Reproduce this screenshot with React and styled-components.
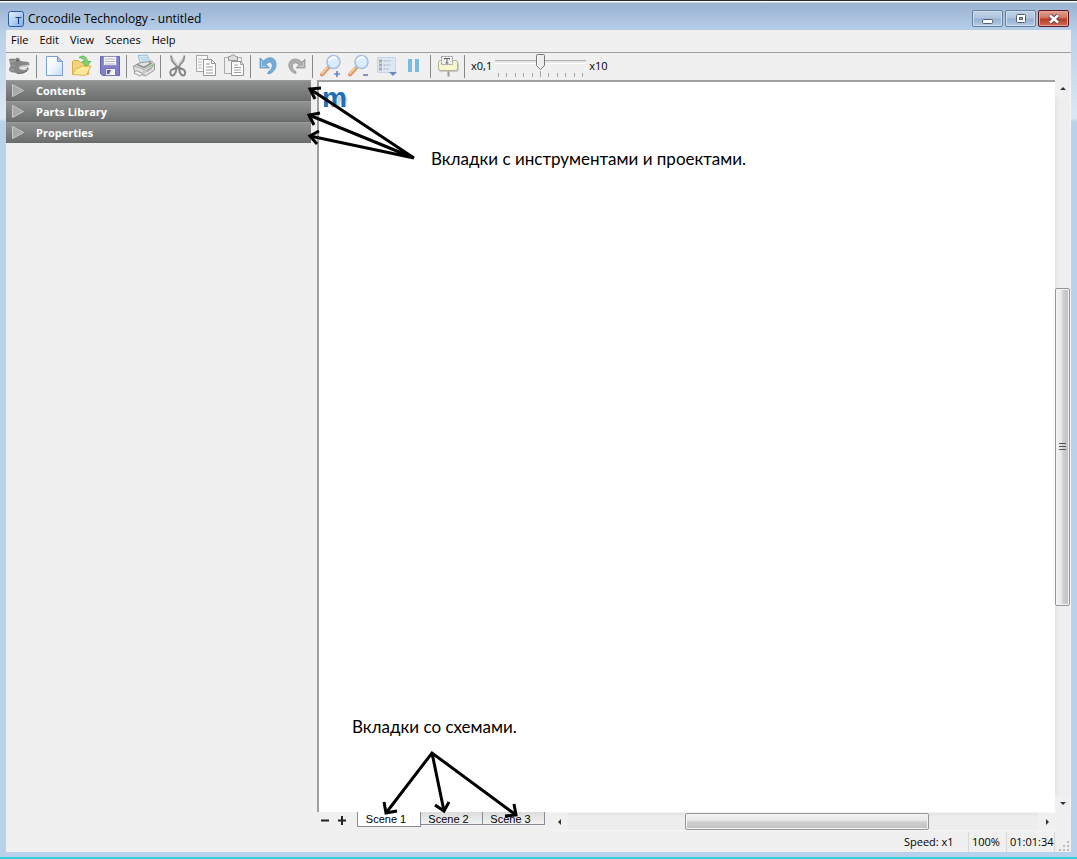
import React, { useState } from "react";
import styled, { createGlobalStyle, css } from "styled-components";

const GlobalStyle = createGlobalStyle`
  *, *::before, *::after { box-sizing: border-box; }
  body { margin: 0; background: #b9d1ea; }
  button { font: inherit; color: inherit; padding: 0; border: 0; background: none; }
  h1 { margin: 0; font-size: inherit; font-weight: inherit; }
  svg { display: block; }
`;

const Window = styled.div`
  display: flex;
  flex-direction: column;
  height: 100vh;
  min-height: 480px;
  padding: 0 6px 5px;
  border-top: 1px solid #2b2b35;
  border-bottom: 2px solid #35cfe3;
  background: linear-gradient(#fff 0 1px, #9ab3d1 2px, #b9d0ea 32px, #dce7f3 114px, #dce7f3 117px, #b9d1ea 121px);
  font: 12px/16px "Open Sans", "Noto Sans", sans-serif;
  color: #000;
`;

const TitleBar = styled.header`
  display: flex;
  align-items: center;
  flex: none;
  height: 29px;
  padding: 6px 2px 0;
  gap: 4px;
`;

const Title = styled.h1`
  flex: 1;
  font-size: 12px;
`;

const WindowButtons = styled.div`
  display: flex;
  gap: 2px;
`;

const WindowButton = styled.button`
  display: grid;
  place-items: center;
  width: 31px;
  height: 17px;
  border: 1px solid ${(p) => (p.$close ? "#5a1620" : "#667f9f")};
  border-radius: 2px;
  box-shadow: inset 0 0 0 1px ${(p) => (p.$close ? "#e5a79b" : "#cfdfee")};
  background: ${(p) =>
    p.$close
      ? "linear-gradient(#e3a193, #d0705f 48%, #b93a23 52%, #cf6b50)"
      : "linear-gradient(#bed0e3, #aec5de 48%, #94b1d0 52%, #b2cbe4)"};
`;

const Client = styled.div`
  display: flex;
  flex-direction: column;
  flex: 1;
  min-height: 0;
  background: #f0f0f0;
`;

const MenuBar = styled.nav`
  display: flex;
  flex: none;
  height: 22px;
  padding: 2px 5px 0;
  gap: 11px;
`;

const MenuItem = styled.button`
  height: 16px;
  font-size: 11px;
`;

const Toolbar = styled.div`
  display: flex;
  flex: none;
  height: 28px;
  border-top: 1px solid #a0a0a0;
`;

const ToolButton = styled.button`
  display: grid;
  place-items: center;
  width: 28px;
  height: 26px;
`;

const ToolSeparator = styled.span`
  width: 1px;
  height: 23px;
  margin: 2px 3px 0 2px;
  background: #888;
`;

const SpeedControl = styled.label`
  display: flex;
  padding-left: 3px;
  gap: 3px;
  font-size: 11px;
  line-height: 26px;
`;

const SliderBox = styled.span`
  display: flex;
  flex-direction: column;
  align-items: center;
  width: 91px;
`;

const thumbImage = `url("data:image/svg+xml,%3Csvg xmlns='http://www.w3.org/2000/svg' width='11' height='17'%3E%3Cpath d='M1.5 1.5Q1.5.5 2.5.5h6q1 0 1 1v10l-4 4-4-4z' fill='%23ededed' stroke='%23767676'/%3E%3Cpath d='M2.5 2v9l3 3' fill='none' stroke='white'/%3E%3C/svg%3E")`;

const Slider = styled.input`
  appearance: none;
  width: 91px;
  height: 17px;
  margin: 1px 0 0;
  background: linear-gradient(#b0b0b0, #b0b0b0) 0 6px / 100% 1px no-repeat,
    linear-gradient(#e3e7e7, #e3e7e7) 0 7px / 100% 2px no-repeat,
    linear-gradient(#fff, #fff) 0 9px / 100% 1px no-repeat;
  &::-webkit-slider-thumb {
    appearance: none;
    width: 11px;
    height: 17px;
    background: ${thumbImage};
  }
`;

const Body = styled.div`
  display: flex;
  flex: 1;
  min-height: 0;
`;

const Sidebar = styled.aside`
  flex: none;
  width: 305px;
  margin-right: 6px;
`;

const SectionHeader = styled.button`
  display: flex;
  align-items: center;
  width: 100%;
  height: 21px;
  padding-left: 5px;
  gap: 12px;
  border-top: 1px solid #9b9b9b;
  border-bottom: 1px solid #686a6a;
  background: linear-gradient(#909292, #6d6f6f);
  color: #fff;
  font-size: 11px;
  font-weight: 700;
`;

const Workspace = styled.main`
  display: grid;
  flex: 1;
  min-width: 0;
  grid-template: minmax(0, 1fr) 19px / minmax(0, 1fr) 16px;
`;

const Canvas = styled.section`
  position: relative;
  border-top: 2px solid #a0a0a0;
  border-left: 2px solid #a0a0a0;
  background: #fff;
`;

const CanvasMark = styled.span`
  position: absolute;
  top: 2px;
  left: 3px;
  font: 700 28px/28px "Liberation Sans", sans-serif;
  color: #1d70b7;

  &::after {
    content: "m";
    position: absolute;
    z-index: -1;
    left: 8px;
    top: 4px;
    font: italic 700 20px/24px "Liberation Sans", sans-serif;
    color: #cfcfcf;
  }
  z-index: 0;
`;

const Note = styled.p`
  position: absolute;
  left: ${(p) => p.$left}px;
  ${(p) => (p.$bottom ? css`bottom: ${p.$bottom}px;` : css`top: ${p.$top}px;`)}
  margin: 0;
  font: 17px/24px Lato, "Open Sans", sans-serif;
  white-space: nowrap;
`;

const Arrows = styled.svg`
  position: absolute;
  z-index: 2;
  left: ${(p) => p.$left}px;
  ${(p) => (p.$bottom ? css`bottom: ${p.$bottom}px;` : css`top: ${p.$top}px;`)}
  fill: none;
  stroke: #000;
  stroke-width: 3;
  pointer-events: none;
`;

const ScrollBar = styled.div`
  display: flex;
  flex: 1;
  flex-direction: ${(p) => (p.$vertical ? "column" : "row")};
  border: 1px solid #f5f5f5;
  border-width: ${(p) => (p.$vertical ? "0 1px 0 0" : "1px 0")};
  background: ${(p) =>
    p.$vertical ? "linear-gradient(90deg, #e3e3e3, #eee 4px)" : "linear-gradient(#e3e3e3, #ededed 4px)"};
`;

const ScrollArrow = styled.button`
  display: grid;
  place-items: center;
  flex: 0 0 17px;
  background: #f0f0f0;
`;

const ScrollSpace = styled.span`
  flex: ${(p) => p.$grow} 0 0;
`;

const ScrollThumb = styled.span`
  display: grid;
  place-items: center;
  flex: ${(p) => p.$grow} 0 0;
  border: 1px solid #959595;
  border-radius: 2px;
  box-shadow: inset 0 0 0 1px #f3f3f3;
  background: linear-gradient(${(p) => (p.$vertical ? "90deg" : "180deg")}, #f4f4f4, #e6e6e8 45%, #cfcfd1 52%, #c0c0c4);
`;

const BottomRow = styled.div`
  display: flex;
  min-width: 0;
`;

const SceneTools = styled.div`
  display: flex;
  width: 40px;
`;

const SceneTool = styled.button`
  display: grid;
  place-items: center;
  width: 17px;
  height: 17px;
`;

const SceneTabs = styled.div`
  display: flex;
  align-items: flex-start;
  width: 194px;
`;

const SceneTab = styled.button`
  width: ${(p) => (p.$active ? 64 : 62)}px;
  height: ${(p) => (p.$active ? 15 : 13)}px;
  padding-right: 6px;
  border: 1px solid #898c95;
  border-top: 0;
  border-left-width: ${(p) => (p.$active ? 1 : 0)}px;
  background: ${(p) => (p.$active ? "#fff" : "linear-gradient(#dcdcdc, #f2f2f2)")};
  font: 11px/14px "Liberation Sans", sans-serif;
`;

const StatusBar = styled.footer`
  display: flex;
  flex: none;
  align-items: center;
  justify-content: flex-end;
  height: 21px;
  font-size: 11px;
`;

const StatusCell = styled.span`
  width: ${(p) => p.$width}px;
  padding-left: 3px;
  border-right: 1px solid #d7d7d7;
  line-height: 20px;
`;

const Grip = styled.svg`
  width: 16px;
  height: 20px;
  fill: #bcbcbc;
`;

const ic = { width: 24, height: 24, viewBox: "0 0 24 24", fill: "none" };

const icons = {
  Contents: (
    <svg {...ic}>
      <path d="M1 5l4-.5 2 .5 2-1.500 2.500 1 .5 2 3 1 4 .2 2 .8.500 2.500-2 1.200-5 .5-4 1 2 1.500 4-.4 3.500-1.500 1 1.500-2 2.500-4 2-6 .2-3-1-3-.2-2-2.300L1 15l1.500-3z" fill="#878787" />
      <path d="M2 8l6-1.500M2.500 15l4 1.500M4 11l3 1" stroke="#a9a9a9" />
      <path d="M11 12.500l3-1 6.500-.8-.5 1.800-6 .5zM12 15l1.500-1 1 1.500 1.500-1.500 1 1 1.500-1.500.5 1.500-3 1.200z" fill="#e9e9e9" />
      <path d="M14 11.500v1.800M16 11.200V13M18 11v1.800" stroke="#888" strokeWidth=".7" />
      <circle cx="9.500" cy="6.500" r="1" fill="#555" />
      <path d="M9 19.500l6-.5 4-2" stroke="#6b6b6b" />
    </svg>
  ),
  New: (
    <svg {...ic}>
      <defs>
        <linearGradient id="pg" x1="0" y1="0" x2="1" y2="1">
          <stop stopColor="#fff" /><stop offset=".5" stopColor="#f1f7ff" /><stop offset="1" stopColor="#bcdcff" />
        </linearGradient>
      </defs>
      <path d="M4.500 2.500h11l5 5v14h-16z" fill="url(#pg)" stroke="#7d9fd4" />
      <path d="M15.500 2.500v5h5z" fill="#a9c9f2" stroke="#7d9fd4" />
    </svg>
  ),
  Open: (
    <svg {...ic}>
      <path d="M2.500 20.500V7.500l1-1h5l1.500 2h8.500v12z" fill="#f4d47a" stroke="#d8ab50" />
      <path d="M2.500 20.500l3-6 4-.5 2-2h9.500l-4 8-1.500 1.500z" fill="#ffe99b" stroke="#ddb055" />
      <path d="M9 3.500c4-3 8-1 8.500 4H21l-5 5-4-5h2.500c0-2-2-3.500-5.500-4z" fill="#83d16f" stroke="#56b45b" strokeWidth=".8" />
    </svg>
  ),
  Save: (
    <svg {...ic}>
      <path d="M2.500 2.500h19v19h-17l-2-2z" fill="#8080ca" stroke="#6565b4" />
      <path d="M5.500 2.500h13v9h-13z" fill="#fbfbfd" stroke="#9292c8" />
      <path d="M7 5h10M7 7.500h10M7 10h10" stroke="#b0b0ba" />
      <path d="M7.500 14.500h10v7h-10z" fill="#e9e9ed" stroke="#7777b0" />
      <path d="M9 16h4l-2 4H9z" fill="#5c5c9b" />
      <path d="M13 21l3-6h1v6z" fill="#fff" />
    </svg>
  ),
  Print: (
    <svg {...ic}>
      <path d="M6 1.500l9-.5 4 8-10 2z" fill="#d7edfd" stroke="#99bdd4" />
      <path d="M8 4l7-.5M9 6l7-.5M10 8l7-.5" stroke="#a8cbe2" />
      <path d="M1.500 12l6-3 12-2 3 3v6l-9 6-11-4z" fill="#e1e1e1" stroke="#999" />
      <path d="M2 12l10 3.500L22 10M12 15.500V21" stroke="#aaa" />
      <path d="M5 10.500l7 3 7-4-2-1.500" stroke="#8a8a8a" strokeWidth="1.500" />
      <path d="M4 16.500l7 3-3 2.500-6-3z" fill="#f3f3f3" stroke="#999" />
      <path d="M14 17.500l6-4" stroke="#aaa" strokeWidth="2" />
      <circle cx="20.500" cy="12" r="1" fill="#69b95d" />
    </svg>
  ),
  Cut: (
    <svg {...ic}>
      <path d="M5 1.500l1 5 6.500 8M18.500 1.500l-1 5-6.500 8" stroke="#8b8b8b" strokeWidth="1.800" />
      <path d="M6 3l6 8M17.500 3l-5 7" stroke="#c6c6c6" />
      <path d="M10.500 13.500l-3 1.500c-3 .5-4 3.500-2.500 6 2.500 1.500 4.500-1.500 5-4zM13 13.500l3 1.500c3 .5 4 3.500 2.500 6-2.500 1.500-4.500-1.500-5-4z" stroke="#858585" strokeWidth="2" />
    </svg>
  ),
  Copy: (
    <svg {...ic}>
      <path d="M2.500 1.500h11v4h-4v12h-7z" fill="#fafafa" stroke="#a7a7a7" />
      <path d="M4 5h5M4 8h4M4 11h4M4 14h4" stroke="#b8b8b8" />
      <path d="M9.500 5.500h8l4 4v12h-12z" fill="#fff" stroke="#969696" />
      <path d="M17.500 5.500v4h4M12 10h4M12 13h7M12 16h7M12 19h7" stroke="#999" />
    </svg>
  ),
  Paste: (
    <svg {...ic}>
      <path d="M2.500 3.500h17v16h-17z" fill="#f0f0f0" stroke="#aaa" />
      <path d="M6.500 2.500h2l1-1.500h3l1 1.500h2v4h-9z" fill="#ddd" stroke="#999" />
      <path d="M9.500 7.500h9l3 3v11h-12z" fill="#fff" stroke="#929292" />
      <path d="M18.500 7.500v3h3M12 11h4M12 13.500h7M12 16h7M12 18.500h7" stroke="#a0a0a0" />
    </svg>
  ),
  Undo: (
    <svg {...ic}>
      <path d="M4 4v10h9.500L10 10.500c2-2.500 5-3.500 6-.5 1 3-1 6-4 8v2c5.500-1 8.500-5.500 8-10.500-.500-6.500-8-7.500-12.500-2.500z" fill="#74acd8" stroke="#6297c4" strokeWidth=".8" />
      <path d="M5.500 7v5.500H10" stroke="#a8d0ed" />
    </svg>
  ),
  Redo: (
    <svg {...ic}>
      <path d="M21 5v9h-9l3-3c-2-2.500-5.500-3-6.500 0-.8 3 1 5 3.500 6.500v2C7 18.500 4 14 5 9.500c1.500-5.500 8-6 13-1.500z" fill="#acacac" stroke="#989898" strokeWidth=".8" />
      <path d="M19.500 8v4.500h-4.500" stroke="#cacaca" />
    </svg>
  ),
};

const Zoom = ({ plus }) => (
  <svg {...ic}>
    <path d="M10 14l-6 6.500" stroke="#dd9560" strokeWidth="4" strokeLinecap="round" />
    <path d="M9.500 13.500L3.500 20" stroke="#ffd6ad" strokeWidth="1.500" />
    <circle cx="15.500" cy="8" r="6.500" fill="#d8edff" stroke="#a7bee3" strokeWidth="1.500" />
    <path d="M11 7c1-3 5-5 7.500-2.500" stroke="#fff" strokeWidth="2" />
    <path d={plus ? "M16 20h6M19 17v6" : "M17 21h5"} stroke="#7184bc" strokeWidth="1.700" />
  </svg>
);

icons["Zoom in"] = <Zoom plus />;
icons["Zoom out"] = <Zoom />;
icons["View options"] = (
  <svg {...ic}>
    <path d="M3.500 3.500h18v15h-18z" fill="#dce6f5" stroke="#c5d4eb" />
    <path d="M5 5.500h3v3H5zM5 9.500h3v3H5zM5 13.500h3v3H5z" fill="#aaa" />
    <path d="M9.500 7h7M9.500 11h7M9.500 15h6" stroke="#aaa" strokeDasharray="2 1" />
    <path d="M15 18h8l-4 4z" fill="#6c88bf" />
  </svg>
);
icons.Pause = <svg {...ic}><path d="M6 5h4v13H6zM13 5h4v13h-4z" fill="#77bbe2" /></svg>;
icons.Probe = (
  <svg {...ic}>
    <path d="M12.500 17v5.500" stroke="#999" strokeWidth="2" />
    <rect x="3" y="8" width="20" height="10" rx="2" fill="#b9b9b9" opacity=".7" />
    <rect x="2.500" y="6.500" width="19" height="10" rx="2" fill="#f7f6cc" stroke="#b1b19a" />
    <path d="M5.500 2.500h11v8h-11z" fill="#f4f4f4" stroke="#8d8d98" strokeDasharray="2 1" />
    <path d="M8.500 4v1.500M13.500 4v1.500M8.500 4.500h5M11 4.500v5M9.500 9h3" stroke="#5f6068" />
  </svg>
);

const toolGroups = [
  ["Contents"],
  ["New", "Open", "Save"],
  ["Print"],
  ["Cut", "Copy", "Paste"],
  ["Undo", "Redo"],
  ["Zoom in", "Zoom out", "View options", "Pause"],
  ["Probe"],
];

const AppIcon = () => (
  <svg width="16" height="16" viewBox="0 0 16 16">
    <defs>
      <linearGradient id="app" x1="0" y1="0" x2="1" y2="1">
        <stop stopColor="#e8f2ff" /><stop offset="1" stopColor="#80ace6" />
      </linearGradient>
    </defs>
    <rect x=".5" y=".5" width="15" height="15" rx="2" fill="url(#app)" stroke="#2859a3" />
    <path d="M7.500 6.500h6M10.500 6v7" stroke="#173f83" strokeWidth="1.200" />
  </svg>
);

const arrowPaths = {
  up: "M1 5l3-3 3 3z",
  down: "M1 2h6l-3 3z",
  left: "M5 1v6L2 4z",
  right: "M3 1v6l3-3z",
};

const Arrow = ({ dir }) => (
  <ScrollArrow aria-label={`Scroll ${dir}`}>
    <svg width="8" height="8"><path d={arrowPaths[dir]} fill="#333" /></svg>
  </ScrollArrow>
);

export default function App() {
  const [speed, setSpeed] = useState(5);
  const [scene, setScene] = useState(1);
  return (
    <>
      <GlobalStyle />
      <Window>
        <TitleBar>
          <AppIcon />
          <Title>Crocodile Technology - untitled</Title>
          <WindowButtons>
            <WindowButton aria-label="Minimize">
              <svg width="12" height="12"><rect x=".5" y="6.500" width="10" height="4" rx="1" fill="#fff" stroke="#52606f" /></svg>
            </WindowButton>
            <WindowButton aria-label="Maximize">
              <svg width="12" height="12">
                <rect x="1.500" y="1.500" width="9" height="8" rx="1" fill="#fff" stroke="#52606f" />
                <rect x="4.500" y="4.500" width="3" height="2" fill="#9bb7d5" stroke="#52606f" />
              </svg>
            </WindowButton>
            <WindowButton $close aria-label="Close">
              <svg width="12" height="12">
                <path d="M2 2.500l8 7M10 2.500l-8 7" stroke="#54494e" strokeWidth="4.500" />
                <path d="M2 2.500l8 7M10 2.500l-8 7" stroke="#fff" strokeWidth="2.500" />
              </svg>
            </WindowButton>
          </WindowButtons>
        </TitleBar>
        <Client>
          <MenuBar>
            {["File", "Edit", "View", "Scenes", "Help"].map((m) => <MenuItem key={m}>{m}</MenuItem>)}
          </MenuBar>
          <Toolbar>
            {toolGroups.map((group) => (
              <React.Fragment key={group[0]}>
                {group.map((name) => <ToolButton key={name} aria-label={name}>{icons[name]}</ToolButton>)}
                <ToolSeparator />
              </React.Fragment>
            ))}
            <SpeedControl>
              x0,1
              <SliderBox>
                <Slider type="range" min="0" max="10" value={speed} aria-label="Simulation speed" onChange={(e) => setSpeed(Number(e.target.value))} />
                <svg width="91" height="6">
                  <path d="M3.500 2v4M11.500 2v4M20.500 2v4M28.500 2v4M37.500 2v4M45.500 0v6M53.500 2v4M62.500 2v4M70.500 2v4M79.500 2v4M87.500 2v4" stroke="#a5a5a5" />
                </svg>
              </SliderBox>
              x10
            </SpeedControl>
          </Toolbar>
          <Body>
            <Sidebar>
              {["Contents", "Parts Library", "Properties"].map((s) => (
                <SectionHeader key={s}>
                  <svg width="13" height="13"><path d="M1.500 .5v12l11-6z" fill="#a8a9a9" stroke="#c9c9c9" /></svg>
                  {s}
                </SectionHeader>
              ))}
            </Sidebar>
            <Workspace>
              <Canvas>
                <CanvasMark>m</CanvasMark>
                <Note $left={112} $top={65}>Вкладки с инструментами и проектами.</Note>
                <Arrows $left={-13} $top={2} width="110" height="80" viewBox="306 84 110 80">
                  <path d="M414 158L310 89M414 158L309 115M414 158L310 136" />
                  <path d="M321 88L310 89L315 99M320 113L309 115L314 125M319 131L310 136L317 144" />
                </Arrows>
                <Note $left={33} $bottom={73}>Вкладки со схемами.</Note>
                <Arrows $left={61} $bottom={-8} width="140" height="72" viewBox="380 748 140 72">
                  <path d="M386 813L432 753L516 815M432 753L444 811" />
                  <path d="M384 802L386 813L397 811M435 805L444 811L449 802M514 804L516 815L505 816" />
                </Arrows>
              </Canvas>
              <ScrollBar $vertical>
                <Arrow dir="up" />
                <ScrollSpace $grow={192} />
                <ScrollThumb $vertical $grow={317}>
                  <svg width="7" height="8"><path d="M0 .5h7M0 3.500h7M0 6.500h7" stroke="#555" /></svg>
                </ScrollThumb>
                <ScrollSpace $grow={190} />
                <Arrow dir="down" />
              </ScrollBar>
              <BottomRow>
                <SceneTools>
                  <SceneTool aria-label="Remove scene"><svg width="9" height="9"><path d="M0 4.500h8" stroke="#222" strokeWidth="2" /></svg></SceneTool>
                  <SceneTool aria-label="Add scene"><svg width="9" height="9"><path d="M0 4.500h8M4 0v9" stroke="#222" strokeWidth="2" /></svg></SceneTool>
                </SceneTools>
                <SceneTabs>
                  {[1, 2, 3].map((n) => (
                    <SceneTab key={n} $active={n === scene} onClick={() => setScene(n)}>Scene {n}</SceneTab>
                  ))}
                </SceneTabs>
                <ScrollBar>
                  <Arrow dir="left" />
                  <ScrollSpace $grow={117} />
                  <ScrollThumb $grow={244} />
                  <ScrollSpace $grow={109} />
                  <Arrow dir="right" />
                </ScrollBar>
              </BottomRow>
            </Workspace>
          </Body>
          <StatusBar>
            <StatusCell $width={68}>Speed: x1</StatusCell>
            <StatusCell $width={38}>100%</StatusCell>
            <StatusCell $width={48}>01:01:34</StatusCell>
            <Grip viewBox="0 0 16 20"><path d="M12 9h2v2h-2zM12 13h2v2h-2zM12 17h2v2h-2zM8 13h2v2H8zM8 17h2v2H8zM4 17h2v2H4z" /></Grip>
          </StatusBar>
        </Client>
      </Window>
    </>
  );
}
